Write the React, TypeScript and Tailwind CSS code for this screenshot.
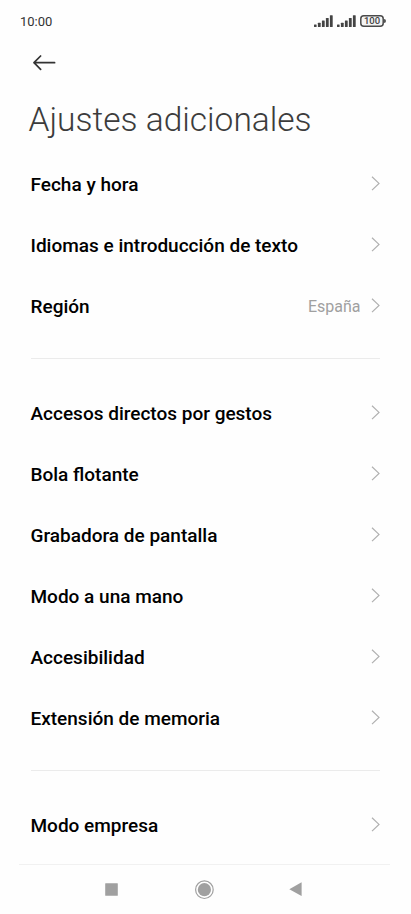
import React from "react";

type Item = { label: string; value?: string };

const groups: Item[][] = [
  [{ label: "Fecha y hora" }, { label: "Idiomas e introducción de texto" }, { label: "Región", value: "España" }],
  [
    { label: "Accesos directos por gestos" },
    { label: "Bola flotante" },
    { label: "Grabadora de pantalla" },
    { label: "Modo a una mano" },
    { label: "Accesibilidad" },
    { label: "Extensión de memoria" },
  ],
  [{ label: "Modo empresa" }],
];

function Signal() {
  return (
    <svg width="19" height="12" viewBox="0 0 19 12" fill="#444">
      <rect x="0" y="9.6" width="2.6" height="2.4" rx="0.5" />
      <rect x="3.9" y="7.8" width="2.8" height="4.2" rx="0.5" />
      <rect x="7.9" y="5.4" width="2.8" height="6.6" rx="0.5" />
      <rect x="11.9" y="3" width="2.8" height="9" rx="0.5" />
      <rect x="15.9" y="0.3" width="2.8" height="11.7" rx="0.5" />
    </svg>
  );
}

function Battery() {
  return (
    <div className="flex items-center">
      <span className="relative flex h-3 w-6 items-center justify-center text-[9.5px] leading-none font-medium text-[#444]">
        <svg className="absolute inset-0" width="24" height="12" viewBox="0 0 24 12">
          <rect x="0.8" y="0.8" width="22.4" height="10.4" rx="3" fill="#f4f4f4" stroke="#4a4a4a" strokeWidth="1.5" />
        </svg>
        <span className="relative">100</span>
      </span>
      <span className="h-1 w-0.5 rounded-r-sm bg-[#555]" />
    </div>
  );
}

function Row({ label, value }: Item) {
  return (
    <div className="flex h-[61px] items-center pr-[31px] pl-[30.5px]">
      <span className="grow pt-0.5 text-[19px] leading-6 font-medium text-black">{label}</span>
      {value && <span className="mr-[10.5px] pt-0.5 text-[16px] text-[#a0a0a0]">{value}</span>}
      <svg width="9" height="15" viewBox="0 0 9 15" fill="none" stroke="#b0b0b0" strokeWidth="1.2">
        <path d="M1 0.7L8 7.4L1 14.1" />
      </svg>
    </div>
  );
}

export default function App() {
  return (
    <div className="flex h-[914px] w-[411px] flex-col overflow-hidden bg-[#fefefe] font-['Roboto',sans-serif]">
      <header className="flex h-[42px] shrink-0 items-center justify-between pr-[25px] pl-5 text-[13px] text-[#333]">
        <span className="pt-px">10:00</span>
        <div className="flex items-center gap-1">
          <Signal />
          <Signal />
          <Battery />
        </div>
      </header>
      <div className="flex h-[42px] shrink-0 items-center pl-[33px]">
        <svg width="23" height="16" viewBox="0 0 23 16" fill="none" stroke="#333" strokeWidth="1.7" strokeLinecap="round" strokeLinejoin="round">
          <path d="M7.6 1L1 7.7L7.6 14.4M1 7.7H21.6" />
        </svg>
      </div>
      <h1 className="h-[69px] shrink-0 pl-[28.5px] text-[33.5px] leading-[72px] font-light text-[#3c3c3c]">Ajustes adicionales</h1>
      <main className="h-[711px] shrink-0 overflow-hidden">
        {groups.map((group, index) => (
          <section key={index}>
            {index > 0 && <div className="mr-[31px] ml-[30.5px] mt-[22px] mb-[23px] h-px bg-[#ebebeb]" />}
            {group.map((item) => <Row key={item.label} {...item} />)}
          </section>
        ))}
      </main>
      <nav className="mr-[21px] ml-[19px] flex h-[50px] shrink-0 items-center border-t border-[#f1f1f1] pl-[86px]">
        <svg width="13" height="13" viewBox="0 0 13 13" fill="#a0a0a0">
          <rect x="0.2" y="0.2" width="12.6" height="12.6" rx="0.5" />
        </svg>
        <svg className="ml-[76px]" width="21" height="20" viewBox="0 0 21 20">
          <circle cx="10.4" cy="9.7" r="8.8" fill="none" stroke="#a0a0a0" strokeWidth="1.2" />
          <circle cx="10.4" cy="9.7" r="6.6" fill="#a0a0a0" />
        </svg>
        <svg className="ml-[74px]" width="13" height="15" viewBox="0 0 13 15" fill="#a0a0a0">
          <path d="M0.3 7.2L12.6 0.3V14.1Z" />
        </svg>
      </nav>
    </div>
  );
}
